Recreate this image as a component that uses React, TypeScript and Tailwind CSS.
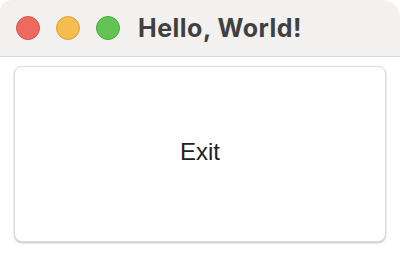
export default function App() {
  return (
    <div className="w-[400px] h-[256px] bg-white overflow-hidden">
      {/* title bar */}
      <div className="flex items-center h-[57px] bg-[#f2f1ef] border-b border-[#d9d8d6] rounded-tl-[12px] rounded-tr-[18px] pl-4">
        <div className="flex gap-4">
          <span className="w-6 h-6 rounded-full bg-[#ee6a5f] border border-[#d9544a]" />
          <span className="w-6 h-6 rounded-full bg-[#f5bd4f] border border-[#d9a23c]" />
          <span className="w-6 h-6 rounded-full bg-[#61c454] border border-[#4ca83f]" />
        </div>
        <h1
          className="ml-[18px] text-[25px] font-bold tracking-[0.5px] text-[#404040] leading-none"
          style={{ fontFamily: "Inter, sans-serif" }}
        >
          Hello, World!
        </h1>
      </div>

      <div className="px-[14px] pt-[9px]">
        <button className="w-full h-[176px] flex items-center justify-center pb-[4px] bg-white border border-[#dddddd] rounded-[8px] shadow-[0_1px_2px_rgba(0,0,0,0.25)] text-[24px] text-[#222222] font-['Liberation_Sans',Arial,sans-serif]">
          Exit
        </button>
      </div>
    </div>
  );
}
